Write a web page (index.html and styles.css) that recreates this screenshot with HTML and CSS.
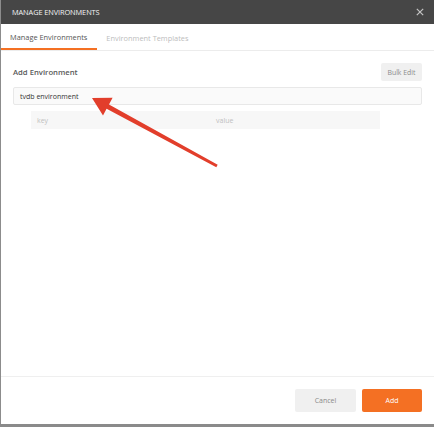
FILE: index.html
```html
<!DOCTYPE html>
<html>
<head>
<meta charset="utf-8">
<link rel="stylesheet" href="styles.css">
</head>
<body>
<div class="modal">
  <div class="header">
    <span class="title">MANAGE ENVIRONMENTS</span>
    <svg class="close" width="8" height="8" viewBox="0 0 8 8"><path d="M0.8 0.8L7.2 7.2M7.2 0.8L0.8 7.2" stroke="#c4c4c4" stroke-width="1.2" fill="none"/></svg>
  </div>
  <div class="tabs">
    <div class="tab active">Manage Environments</div>
    <div class="tab">Environment Templates</div>
  </div>
  <div class="body">
    <div class="row-head">
      <span class="label">Add Environment</span>
      <button class="bulk">Bulk Edit</button>
    </div>
    <div class="name-input">tvdb environment</div>
    <div class="kv">
      <div class="cell key">key</div>
      <div class="cell value">value</div>
    </div>
  </div>
  <div class="footer">
    <button class="btn cancel">Cancel</button>
    <button class="btn add">Add</button>
  </div>
  <svg class="arrow" width="434" height="427" viewBox="0 0 434 427">
    <polygon points="92,98 112.6,97.8 109,104.4 217.7,164.7 216.3,167.3 106.6,108.8 103,115.4" fill="#e23e2b"/>
  </svg>
</div>
</body>
</html>
```
FILE: styles.css
```css
* { box-sizing: border-box; }
html, body { margin: 0; padding: 0; background: #fff; }
body { width: 434px; height: 427px; overflow: hidden; font-family: "Open Sans", "Liberation Sans", sans-serif; }
.modal {
  position: relative;
  width: 434px;
  height: 427px;
  display: flex;
  flex-direction: column;
  border-left: 1px solid #8c8c8c;
  border-bottom: 3px solid #8a8a8a;
  background: #fff;
}
.header {
  height: 24px;
  background: #464646;
  display: flex;
  align-items: center;
  justify-content: space-between;
  padding: 0 10px 0 11px;
}
.title { color: #f4f4f4; font-size: 7.4px; letter-spacing: -0.1px; }
.close { display: block; }
.tabs {
  height: 27px;
  display: flex;
  border-bottom: 1px solid #ececec;
}
.tab {
  display: flex;
  align-items: center;
  padding: 2px 9px 0 9px;
  font-size: 7.4px;
  color: #bdbdbd;
}
.tab.active { color: #555; border-bottom: 2px solid #f47023; padding-right: 10px; }
.body { flex: 1; padding: 12px 12px 0 12px; }
.row-head { display: flex; justify-content: space-between; align-items: center; height: 18px; }
.label { font-size: 7.7px; font-weight: 600; color: #5a5a5a; }
.bulk {
  width: 41px; height: 18px; border: 0; border-radius: 2px;
  background: #f0f0f0; color: #8c8c8c;
  font-family: inherit; font-size: 6.9px; padding: 0;
}
.name-input {
  margin-top: 6px;
  height: 18px;
  border: 1px solid #e8e8e8;
  border-radius: 2px;
  background: #fafafa;
  display: flex; align-items: center;
  padding-left: 6px;
  font-size: 7px; color: #333;
}
.kv {
  margin: 6px 0 0 18px;
  width: 349px;
  height: 18px;
  display: flex;
  background: #f7f7f7;
}
.cell { display: flex; align-items: center; font-size: 7px; color: #bfbfbf; }
.key { width: 179px; padding-left: 6px; }
.value { flex: 1; padding-left: 6px; }
.footer {
  height: 48px;
  border-top: 1px solid #efefef;
  display: flex;
  justify-content: flex-end;
  align-items: center;
  gap: 6px;
  padding-right: 12px;
}
.btn {
  height: 23px; border: 0; border-radius: 2px; padding: 0;
  font-family: inherit; font-size: 7px;
}
.cancel { width: 61px; background: #f0f0f0; color: #8a8a8a; }
.add { width: 60px; background: #f47023; color: #fff; }
.arrow { position: absolute; left: -1px; top: 0; pointer-events: none; }
```
